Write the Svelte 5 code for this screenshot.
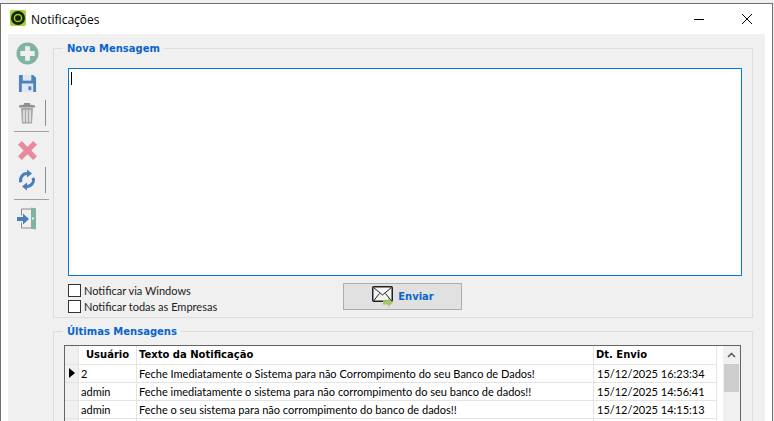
<script>
  const messages = [
    { user: '2', text: 'Feche Imediatamente o Sistema para não Corrompimento do seu Banco de Dados!', date: '15/12/2025 16:23:34', current: true },
    { user: 'admin', text: 'Feche imediatamente o sistema para não corrompimento do seu banco de dados!!', date: '15/12/2025 14:56:41' },
    { user: 'admin', text: 'Feche o seu sistema para não corrompimento do banco de dados!!', date: '15/12/2025 14:15:13' },
    { user: '', text: '', date: '' }
  ];
</script>

<div class="window">
  <header class="titlebar">
    <svg class="app-icon" viewBox="0 0 16 16">
      <rect width="16" height="16" rx="2" fill="#a4d03a" />
      <circle cx="8" cy="8" r="7" fill="#16210c" />
      <circle cx="8" cy="8" r="3.600" fill="none" stroke="#9fce2a" stroke-width="1.500" />
    </svg>
    <span class="title">Notificações</span>
    <span class="spacer"></span>
    <button class="win-btn" aria-label="Minimizar">
      <svg viewBox="0 0 12 12" width="12" height="12"><path d="M1 6.500h10" stroke="#000" fill="none" /></svg>
    </button>
    <button class="win-btn" aria-label="Fechar">
      <svg viewBox="0 0 12 12" width="12" height="12"><path d="M1 1l10 10M11 1L1 11" stroke="#000" fill="none" /></svg>
    </button>
  </header>

  <div class="panel">
    <nav class="toolbar">
      <button class="tool" aria-label="Novo">
        <svg viewBox="0 0 24 24" width="23" height="23">
          <circle cx="12" cy="12" r="11.500" fill="#7fb5a0" />
          <path d="M9.500 4.500h5v5h5v5h-5v5h-5v-5h-5v-5h5z" fill="#f0f0f0" />
        </svg>
      </button>
      <button class="tool" aria-label="Salvar">
        <svg viewBox="0 0 20 20" width="19" height="19">
          <path d="M1 1h15l3 3v15H1z" fill="#4f81bd" />
          <rect x="5" y="1" width="9" height="6" fill="#dfe8f2" />
          <rect x="4" y="10" width="12" height="9" fill="#dfe8f2" />
          <rect x="11" y="13" width="3" height="4" fill="#4f81bd" />
        </svg>
      </button>
      <div class="tool-row">
        <button class="tool" aria-label="Excluir">
          <svg viewBox="0 0 18 22" width="18" height="22">
            <path d="M1 3.500q8-2 16 0v2H1zM6 1h6v2H6z" fill="#8f8f8f" />
            <path d="M3 6h12l-1 15.500H4z" fill="#a8a8a8" />
            <path d="M6 8v12M9 8v12M12 8v12" stroke="#eee" stroke-width="1.400" />
          </svg>
        </button>
        <span class="vline"></span>
      </div>
      <hr class="sep-a" />
      <button class="tool tool-cancel" aria-label="Cancelar">
        <svg viewBox="0 0 22 22" width="21" height="21">
          <path d="M5 1l6 6 6-6 4 4-6 6 6 6-4 4-6-6-6 6-4-4 6-6-6-6z" fill="#e88a9e" />
        </svg>
      </button>
      <div class="tool-row">
        <button class="tool" aria-label="Atualizar">
          <svg viewBox="0 0 18 22" width="18" height="22">
            <path d="M9 4.500A6.500 6.500 0 0 0 2.900 13.200" fill="none" stroke="#4a7fbd" stroke-width="3" />
            <path d="M9 17.500A6.500 6.500 0 0 0 15.100 8.800" fill="none" stroke="#4a7fbd" stroke-width="3" />
            <path d="M9 0.500l5 4-5 4zM9 21.500l-5-4 5-4z" fill="#4a7fbd" />
          </svg>
        </button>
        <span class="vline"></span>
      </div>
      <hr class="sep-b" />
      <button class="tool" aria-label="Sair">
        <svg viewBox="0 0 20 22" width="20" height="23">
          <path d="M4.500 8V1.500h14v19h-14V15" fill="none" stroke="#8a8a8a" />
          <path d="M14 0l5 1v21l-5-1z" fill="#7fb5a0" />
          <rect x="15" y="10" width="2" height="2" fill="#e6f0ea" />
          <path d="M0 9.500h6V6l6 5.500-6 5.500v-3.500H0z" fill="#4a7fbd" />
        </svg>
      </button>
    </nav>

    <div class="content">
      <fieldset class="group new-message">
        <legend>Nova Mensagem</legend>
        <div class="editor"><span class="caret"></span></div>
        <div class="send-row">
          <div class="checks">
            <label><span class="check"></span>Notificar via Windows</label>
            <label><span class="check"></span>Notificar todas as Empresas</label>
          </div>
          <button class="send">
            <svg viewBox="0 0 22 21" width="22" height="21">
              <rect x="0.750" y="0.750" width="19.500" height="14.500" rx="1" fill="#f4f4f4" stroke="#222" stroke-width="1.500" />
              <path d="M1.500 1.500l9 7.500 9-7.500M1.500 15l6-7.500M19.500 15l-6-7.500" fill="none" stroke="#222" />
              <path d="M11 14.500h5V12l5 4.500-5 4.500v-2.500h-5z" fill="#a6c765" />
            </svg>
            <span>Enviar</span>
          </button>
        </div>
      </fieldset>

      <fieldset class="group last-messages">
        <legend>Últimas Mensagens</legend>
        <div class="grid">
          <div class="rows">
            <div class="row head">
              <span class="c-ind"></span>
              <span class="c-user">Usuário</span>
              <span class="c-text">Texto da Notificação</span>
              <span class="c-date">Dt. Envio</span>
            </div>
            {#each messages as m}
              <div class="row">
                <span class="c-ind">{#if m.current}<i class="arrow"></i>{/if}</span>
                <span class="c-user">{m.user}</span>
                <span class="c-text">{m.text}</span>
                <span class="c-date">{m.date}</span>
              </div>
            {/each}
          </div>
          <div class="scrollbar">
            <svg viewBox="0 0 9 6" width="9" height="6"><path d="M1 5l3.500-3.500L8 5" fill="none" stroke="#555" stroke-width="1.500" /></svg>
            <div class="thumb"></div>
          </div>
        </div>
      </fieldset>
    </div>
  </div>
</div>

<style>
  :global(body) {
    margin: 0;
    background: #f0f0f0;
    overflow: hidden;
  }

  .window {
    box-sizing: border-box;
    width: 773px;
    height: 418px;
    margin-top: 3px;
    border: 1px solid #707070;
    border-bottom: 0;
    background: #fff;
    display: flex;
    flex-direction: column;
    overflow: hidden;
    font-family: "Lato", "Liberation Sans", sans-serif;
    font-size: 11px;
    color: #000;
  }

  .titlebar {
    height: 30px;
    flex: none;
    display: flex;
    align-items: center;
    padding: 0 1px 0 9px;
    box-sizing: border-box;
  }

  .app-icon {
    width: 16px;
    height: 16px;
    margin-bottom: 2px;
  }

  .title {
    margin-left: 5px;
    font-family: "Open Sans", "Noto Sans", sans-serif;
    font-size: 12px;
  }

  .spacer {
    flex: 1;
  }

  .win-btn {
    width: 48px;
    height: 30px;
    border: 0;
    padding: 0;
    background: none;
    display: flex;
    align-items: center;
    justify-content: center;
  }

  .panel {
    flex: 1;
    min-height: 0;
    margin: 0 7px;
    background: #f0f0f0;
    display: flex;
  }

  .toolbar {
    width: 38px;
    flex: none;
    display: flex;
    flex-direction: column;
    align-items: center;
    padding-top: 4px;
  }

  .tool {
    width: 38px;
    height: 30px;
    flex: none;
    border: 0;
    padding: 0;
    background: none;
    display: flex;
    align-items: center;
    justify-content: center;
  }

  .tool-row {
    position: relative;
    width: 38px;
    height: 30px;
    flex: none;
  }

  .vline {
    position: absolute;
    left: 37px;
    top: 2px;
    width: 1px;
    height: 26px;
    background: #8c8c8c;
  }

  .toolbar hr {
    width: 35px;
    height: 1px;
    flex: none;
    border: 0;
    background: #a0a0a0;
    align-self: flex-start;
  }

  .sep-a {
    margin: 3px 0 2px 6px;
  }

  .tool-cancel {
    margin-top: 1px;
  }

  .sep-b {
    margin: 4px 0 3px 6px;
  }

  .content {
    flex: 1;
    min-width: 0;
    padding: 8px 12px 0 7px;
  }

  .group {
    margin: 0;
    padding: 0;
    border: 1px solid #dcdcdc;
    min-width: 0;
    box-sizing: border-box;
  }

  legend {
    padding: 0 4px;
    font-family: "DejaVu Sans", sans-serif;
    font-weight: bold;
    font-size: 10px;
    color: #0a64c8;
    line-height: 13px;
  }

  .new-message {
    height: 276px;
    padding: 13px 10px 0 14px;
  }

  .new-message legend {
    margin-left: -5px;
  }

  .editor {
    box-sizing: border-box;
    height: 208px;
    border: 1px solid #0078d7;
    background: #fff;
    padding: 3px 2px;
  }

  .caret {
    display: block;
    width: 1px;
    height: 13px;
    background: #000;
  }

  .send-row {
    display: flex;
    margin-top: 7px;
  }

  .checks {
    width: 275px;
    display: flex;
    flex-direction: column;
    gap: 3px;
    padding-top: 1px;
  }

  label {
    display: flex;
    align-items: center;
    height: 13px;
    white-space: nowrap;
    color: #202020;
  }

  .check {
    box-sizing: border-box;
    width: 13px;
    height: 13px;
    margin-right: 3px;
    border: 1px solid #333;
    background: #fff;
  }

  .send {
    box-sizing: border-box;
    width: 119px;
    height: 27px;
    border: 1px solid #adadad;
    background: #e1e1e1;
    padding: 0 0 0 1px;
    display: flex;
    align-items: center;
    justify-content: center;
    gap: 4px;
    font-family: "DejaVu Sans", sans-serif;
    font-weight: bold;
    font-size: 10px;
    color: #0a64c8;
  }

  .last-messages {
    margin-top: 7px;
    height: 110px;
    padding: 7px 11px 0 10px;
  }

  .last-messages legend {
    margin-left: -1px;
  }

  .grid {
    height: 100px;
    border: 1px solid #646464;
    border-bottom: 0;
    background: #fff;
    display: flex;
    justify-content: space-between;
  }

  .rows {
    width: 652px;
    flex: none;
  }

  .row {
    display: flex;
    height: 18px;
    box-sizing: border-box;
    border-bottom: 1px solid #e4e4e4;
    line-height: 17px;
    white-space: nowrap;
  }

  .head {
    font-family: "DejaVu Sans", sans-serif;
    font-weight: bold;
    font-size: 10px;
    height: 19px;
  }

  .row span {
    box-sizing: border-box;
    overflow: hidden;
    border-right: 1px solid #e4e4e4;
    padding-left: 2px;
  }

  .c-ind {
    width: 14px;
    background: #f0f0f0;
    position: relative;
  }

  .row .c-user {
    width: 58px;
  }

  .row .c-text {
    width: 457px;
  }

  .row .c-date {
    width: 123px;
    padding-left: 3px;
  }

  .head .c-user {
    padding-left: 7px;
  }

  .row.head .c-date {
    padding-left: 2px;
  }

  .arrow {
    position: absolute;
    left: 4px;
    top: 3px;
    border-left: 6px solid #000;
    border-top: 5px solid transparent;
    border-bottom: 5px solid transparent;
  }

  .scrollbar {
    width: 17px;
    background: #f0f0f0;
    display: flex;
    flex-direction: column;
    align-items: center;
  }

  .scrollbar svg {
    margin: 6px 0 6px;
  }

  .thumb {
    width: 15px;
    height: 28px;
    background: #cdcdcd;
  }
</style>
